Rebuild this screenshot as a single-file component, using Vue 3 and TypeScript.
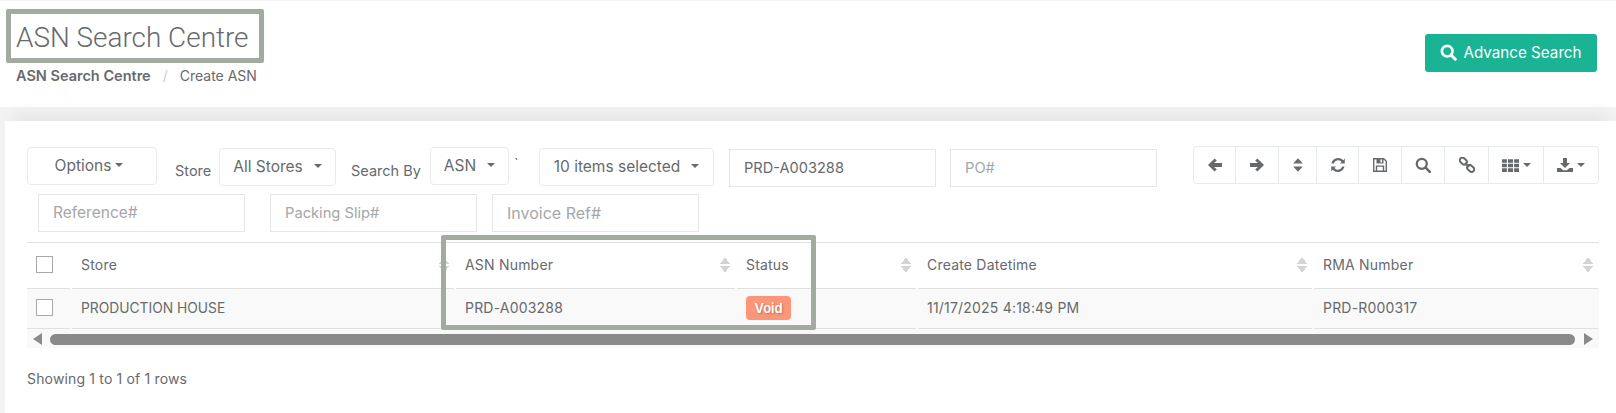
<script setup lang="ts">
const columns = [
  { key: 'store', label: 'Store', value: 'PRODUCTION HOUSE', width: 382 },
  { key: 'asn', label: 'ASN Number', value: 'PRD-A003288', width: 279 },
  { key: 'status', label: 'Status', value: '', width: 179 },
  { key: 'created', label: 'Create Datetime', value: '11/17/2025 4:18:49 PM', width: 394 },
  { key: 'rma', label: 'RMA Number', value: 'PRD-R000317', width: 284 },
]
</script>

<template>
  <div class="page">
    <header class="head">
      <div class="head-text">
        <h1 class="title">ASN Search Centre</h1>
        <div class="crumbs"><b>ASN Search Centre</b><span class="slash">/</span><span>Create ASN</span></div>
      </div>
      <button class="adv">
        <svg class="adv-icon" viewBox="0 0 18 18"><circle cx="7.6" cy="7.6" r="5.6" fill="none" stroke="currentColor" stroke-width="2.8"/><path d="M11.6 11.6 16.2 16.2" stroke="currentColor" stroke-width="3.2" stroke-linecap="round"/></svg>
        Advance Search
      </button>
    </header>

    <section class="card">
      <div class="tools">
        <div class="filters">
          <div class="row one">
            <button class="dd options">Options <i class="caret small"></i></button>
            <label class="lbl store-l">Store</label>
            <button class="dd stores">All Stores <i class="caret"></i></button>
            <label class="lbl search-l">Search By</label>
            <button class="dd asn">ASN <i class="caret"></i></button>
            <span class="tick">`</span>
            <button class="dd items">10 items selected <i class="caret"></i></button>
            <input class="inp first" value="PRD-A003288" />
            <input class="inp second" placeholder="PO#" />
          </div>
          <div class="row two">
            <input class="inp ref" placeholder="Reference#" />
            <input class="inp pack" placeholder="Packing Slip#" />
            <input class="inp inv" placeholder="Invoice Ref#" />
          </div>
        </div>

        <div class="group">
          <button class="ib w42"><svg viewBox="0 0 16 16"><path d="M1 8 7.6 1.4 9.8 3.6 7.2 6.1H15V9.9H7.2L9.8 12.4 7.6 14.6Z"/></svg></button>
          <button class="ib w43"><svg viewBox="0 0 16 16"><path d="M15 8 8.4 1.4 6.2 3.6 8.8 6.1H1V9.9H8.8L6.2 12.4 8.4 14.6Z"/></svg></button>
          <button class="ib w38"><svg viewBox="0 0 16 16"><path d="M8 1.2 12.8 6.6H3.2ZM8 14.8 3.2 9.4H12.8Z"/></svg></button>
          <button class="ib w42"><svg viewBox="0 0 16 16"><path d="M13.3 3.2 14.8 1.6V6.6H9.9L11.6 4.9A4.6 4.6 0 0 0 3.8 6.4H1.5A6.9 6.9 0 0 1 13.3 3.2ZM2.7 12.8 1.2 14.4V9.4H6.1L4.4 11.1A4.6 4.6 0 0 0 12.2 9.6H14.5A6.9 6.9 0 0 1 2.7 12.8Z"/></svg></button>
          <button class="ib w43"><svg viewBox="0 0 16 16"><path fill-rule="evenodd" d="M1 1H12L15 4V15H1ZM2.4 2.4V13.6H3.8V8.4H12.2V13.6H13.6V4.6L11.5 2.5V6.6H4.5V2.4ZM5.2 9.8V13.6H10.8V9.8ZM8.4 2.6V5.4H10V2.6Z"/></svg></button>
          <button class="ib w43"><svg viewBox="0 0 16 16"><circle cx="6.8" cy="6.8" r="5" fill="none" stroke="currentColor" stroke-width="2.3"/><path d="M10.4 10.4 14.8 14.8" stroke="currentColor" stroke-width="2.6" stroke-linecap="round"/></svg></button>
          <button class="ib w44"><svg class="link" viewBox="0 0 16 16" fill="none" stroke="#676a6c" stroke-width="2"><rect x="-3.8" y="-2.6" width="7.6" height="5.2" rx="2.5" transform="translate(4.3 4.1) rotate(42)"/><rect x="-3.8" y="-2.6" width="7.6" height="5.2" rx="2.5" transform="translate(11.7 11.5) rotate(42)"/><path d="M6 6 10 10"/></svg></button>
          <button class="ib w55"><svg class="wide" viewBox="0 0 16 16"><path d="M0 2H4.6V5.4H0ZM5.6 2H10.4V5.4H5.6ZM11.4 2H16V5.4H11.4ZM0 6.4H4.6V9.6H0ZM5.6 6.4H10.4V9.6H5.6ZM11.4 6.4H16V9.6H11.4ZM0 10.6H4.6V14H0ZM5.6 10.6H10.4V14H5.6ZM11.4 10.6H16V14H11.4Z"/></svg><i class="caret small"></i></button>
          <button class="ib w54"><svg viewBox="0 0 16 16"><path d="M6 1H10V6H13L8 11 3 6H6ZM0 11H3.6L6 13.2H10L12.4 11H16V15H0Z"/></svg><i class="caret small"></i></button>
        </div>
      </div>

      <div class="table">
        <div class="tr th">
          <div class="cell check"><span class="box"></span></div>
          <div v-for="c in columns" :key="c.key" class="cell" :style="{ width: c.width + 'px' }">
            <span class="txt">{{ c.label }}</span>
            <span class="sort"></span>
          </div>
        </div>
        <div class="tr td">
          <div class="cell check"><span class="box"></span></div>
          <div v-for="c in columns" :key="c.key" class="cell" :style="{ width: c.width + 'px' }">
            <span v-if="c.key === 'status'" class="void">Void</span>
            <span v-else class="txt" :class="{ upper: c.key === 'store' }">{{ c.value }}</span>
          </div>
        </div>
        <div class="scroll">
          <i class="arrow left"></i>
          <span class="thumb"></span>
          <i class="arrow right"></i>
        </div>
      </div>

      <p class="foot">Showing 1 to 1 of 1 rows</p>
    </section>

    <div class="mark mark-title"></div>
    <div class="mark mark-cols"></div>
  </div>
</template>

<style>
html, body { margin: 0; background: #f3f3f4; }
</style>

<style scoped>
.page {
  position: relative;
  width: 1616px;
  height: 413px;
  overflow: hidden;
  background: #f3f3f4;
  font-family: Inter, Roboto, "Liberation Sans", sans-serif;
  font-size: 14px;
  color: #676a6c;
}
.head {
  height: 106px;
  margin-top: 1px;
  background: #fff;
  display: flex;
  justify-content: space-between;
  align-items: flex-start;
  padding: 0 19px 0 16px;
  box-sizing: border-box;
}
.title {
  margin: 20px 0 0;
  font-family: Roboto, sans-serif;
  font-size: 27.9px;
  line-height: 34px;
  font-weight: 300;
}
.crumbs { margin-top: 12px; line-height: 17px; font-size: 14px; }
.crumbs b { font-weight: 600; font-size: 14.5px; }
.slash { color: #ccc; margin: 0 12px; }
.adv {
  margin-top: 33px;
  width: 172px;
  height: 38px;
  border: 0;
  border-radius: 3px;
  background: #1ab394;
  color: #fff;
  font: 400 15.2px Inter, Roboto, sans-serif;
  display: flex;
  align-items: center;
  justify-content: center;
  gap: 6px;
  padding: 0 0 2px;
}
.adv-icon { width: 17px; height: 17px; }
.card {
  margin: 14px 0 0 5px;
  height: 292px;
  background: #fff;
  padding: 25px 17px 0 22px;
  box-sizing: border-box;
  box-shadow: 0 -14px 14px -8px #e4e4e4;
}
.tools { position: relative; display: flex; justify-content: space-between; height: 96px; }
.row { display: flex; align-items: flex-start; }
.dd, .inp, .ib { box-sizing: border-box; font-family: inherit; font-size: 14px; color: #676a6c; background: #fff; }
.dd {
  height: 38px;
  border: 1px solid #e7eaec;
  border-radius: 4px;
  display: flex;
  align-items: center;
  justify-content: center;
  padding: 0 0 2px;
  font-size: 15.5px;
}
.caret {
  display: inline-block;
  margin-left: 11px;
  border-top: 4px solid #676a6c;
  border-left: 4px solid transparent;
  border-right: 4px solid transparent;
}
.caret.small { margin-left: 4px; }
.options { width: 130px; margin-top: 1px; padding-right: 6px; }
.lbl { margin-top: 16px; line-height: 18px; font-size: 14.5px; }
.store-l { margin-left: 18px; width: 44px; }
.stores { width: 117px; margin-top: 2px; }
.search-l { margin-left: 15px; width: 79px; }
.asn { width: 79px; margin-top: 1px; }
.tick { width: 30px; padding-left: 5px; box-sizing: border-box; line-height: 20px; margin-top: 8px; }
.items { width: 175px; margin-top: 2px; }
.inp {
  height: 38px;
  border: 1px solid #e5e6e7;
  padding: 0 14px 1px;
  outline: none;
  font-size: 14.7px;
}
.inp::placeholder { color: #a5a7a8; opacity: 1; }
.first { width: 207px; margin: 3px 0 0 15px; font-size: 14.6px; }
.second { width: 207px; margin: 3px 0 0 14px; }
.two { margin-top: 7px; padding-left: 11px; }
.ref { width: 207px; font-size: 15.5px; }
.pack { width: 207px; margin-left: 25px; }
.inv { width: 207px; margin-left: 15px; font-size: 16px; }
.group {
  position: absolute;
  right: 0;
  top: 0;
  display: flex;
  height: 38px;
  border: 1px solid #e7eaec;
  border-radius: 4px;
  box-sizing: border-box;
  background: #fff;
}
.ib {
  border: 0;
  border-right: 1px solid #e7eaec;
  display: flex;
  align-items: center;
  justify-content: center;
  padding: 0;
  background: transparent;
  color: #676a6c;
}
.ib:last-child { border-right: 0; }
.ib svg { width: 16px; height: 16px; fill: currentColor; }
.ib svg.link { fill: none; }
.ib svg.wide { width: 17px; height: 17px; }
.w42 { width: 42px; } .w43 { width: 43px; } .w38 { width: 38px; } .w44 { width: 44px; } .w55 { width: 55px; } .w54 { width: 54px; }
.table {
  width: 1572px;
  border-top: 1px solid #e0e0e0;
  overflow: hidden;
}
.tr { display: flex; gap: 2px; }
.th { height: 46px; }
.td { height: 40px; background: #f9f9f9; }
.cell {
  flex: none;
  box-sizing: border-box;
  display: flex;
  align-items: center;
  justify-content: space-between;
  padding: 0 5px 2px 9px;
  border-bottom: 1px solid #e0e0e0;
}
.txt { letter-spacing: .2px; }
.txt.upper { letter-spacing: 0; font-size: 13.8px; }
.check { width: 43px; padding-left: 9px; margin-right: 0; }
.box {
  box-sizing: border-box;
  width: 17px;
  height: 17px;
  border: 1px solid #a9a9a9;
  background: #fff;
}
.sort {
  width: 10px;
  height: 18px;
  background:
    linear-gradient(to bottom right, transparent 50%, #d4d4d4 50%) 0 1px / 5px 7px no-repeat,
    linear-gradient(to bottom left, transparent 50%, #d4d4d4 50%) 5px 1px / 5px 7px no-repeat,
    linear-gradient(to top right, transparent 50%, #d4d4d4 50%) 0 10px / 5px 7px no-repeat,
    linear-gradient(to top left, transparent 50%, #d4d4d4 50%) 5px 10px / 5px 7px no-repeat;
}
.void {
  display: inline-block;
  width: 45px;
  height: 24px;
  line-height: 24px;
  text-align: center;
  border-radius: 4px;
  background: #fb9678;
  color: #fff;
  font-weight: 600;
  font-size: 13px;
  text-shadow: 1px 1px 2px rgba(0, 0, 0, .25);
}
.scroll {
  height: 19px;
  background: #f9f9f9;
  display: flex;
  align-items: center;
  padding: 4px 6px 3px 6px;
  box-sizing: border-box;
}
.thumb { flex: 1; height: 11px; margin: 0 9px 0 8px; border-radius: 6px; background: #8a8a8a; }
.arrow { width: 0; height: 0; border-top: 6px solid transparent; border-bottom: 6px solid transparent; }
.arrow.left { border-right: 9px solid #8a8a8a; }
.arrow.right { border-left: 9px solid #8a8a8a; }
.foot { margin: 22px 0 0; font-size: 14px; letter-spacing: .16px; line-height: 18px; }
.mark {
  position: absolute;
  box-sizing: border-box;
  border: 5px solid #a3aba0;
  border-radius: 2px;
  pointer-events: none;
}
.mark-title { left: 6px; top: 9px; width: 258px; height: 54px; }
.mark-cols { left: 441px; top: 235px; width: 375px; height: 95px; }
</style>
